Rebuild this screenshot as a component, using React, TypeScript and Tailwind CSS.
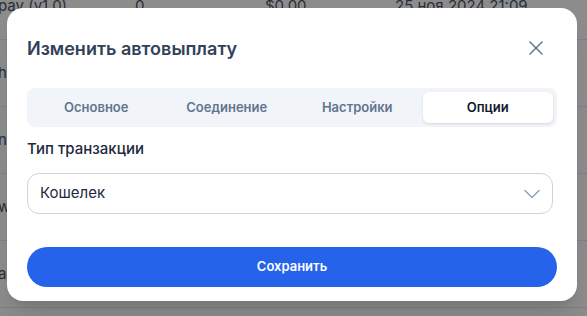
import { X, ChevronDown } from "lucide-react";

const ROWS = [
  { name: "pay (v1.0)", count: "0", sum: "$0.00", date: "25 ноя 2024 21:09" },
  { name: "hpay", count: "0", sum: "$0.00", date: "24 ноя 2024 18:42" },
  { name: "ntpay", count: "0", sum: "$0.00", date: "22 ноя 2024 10:15" },
  { name: "wallet", count: "0", sum: "$0.00", date: "20 ноя 2024 09:30" },
  { name: "apay", count: "0", sum: "$0.00", date: "18 ноя 2024 14:05" },
];

const TABS = ["Основное", "Соединение", "Настройки", "Опции"];

export default function App() {
  return (
    <div className="relative h-[316px] w-full overflow-hidden bg-white font-['Inter',sans-serif]">
      {/* table behind the dialog */}
      <div className="-mt-[27px]">
        {ROWS.map((r) => (
          <div
            key={r.name}
            className="grid h-[67px] grid-cols-[135px_130px_130px_1fr] items-center border-b border-gray-200 text-[15px] text-gray-600"
          >
            <div className="-ml-[2px] whitespace-nowrap">{r.name}</div>
            <div>{r.count}</div>
            <div>{r.sum}</div>
            <div className="whitespace-nowrap">{r.date}</div>
          </div>
        ))}
      </div>

      <div className="absolute inset-0 bg-black/45" />

      <div className="absolute left-[7px] top-[8px] flex h-[293px] w-[570px] flex-col rounded-2xl bg-white px-5 shadow-xl">
        <div className="mt-[26px] flex h-[28px] items-center justify-between">
          <h2 className="text-[18px] font-semibold text-slate-700">Изменить автовыплату</h2>
          <button className="mr-[9px] text-slate-500">
            <X className="h-6 w-6" strokeWidth={1.5} />
          </button>
        </div>

        <div className="mt-[26px] grid h-[39px] grid-cols-4 rounded-lg bg-slate-100 p-1">
          {TABS.map((t) => (
            <div
              key={t}
              className={
                t === "Опции"
                  ? "flex items-center justify-center rounded-md bg-white text-[13px] font-semibold text-slate-900 shadow-sm"
                  : "flex items-center justify-center text-[13px] font-semibold text-slate-500"
              }
            >
              {t}
            </div>
          ))}
        </div>

        <div className="mt-[13px] text-[15px] font-medium leading-[18px] text-slate-800">Тип транзакции</div>

        <div className="mr-1 mt-[15px] flex h-[41px] items-center justify-between rounded-xl border border-slate-300 pl-3 pr-[6px]">
          <span className="text-[15px] text-slate-800">Кошелек</span>
          <ChevronDown className="h-7 w-7 text-slate-400" strokeWidth={1.25} />
        </div>

        <button className="mt-[33px] h-[40px] w-full rounded-full bg-[#2563eb] text-[13px] font-semibold text-white">
          Сохранить
        </button>
      </div>
    </div>
  );
}
